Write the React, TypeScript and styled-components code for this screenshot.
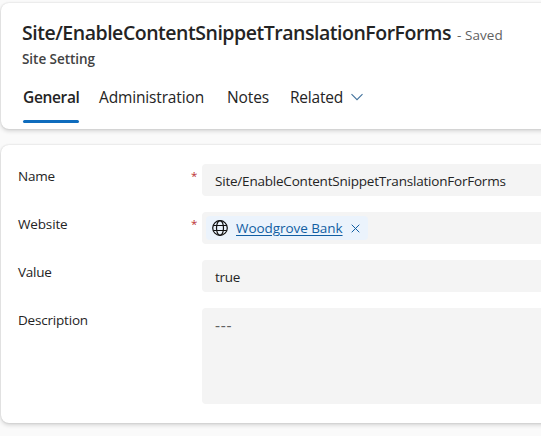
import React from "react";
import styled, { createGlobalStyle } from "styled-components";

const GlobalStyle = createGlobalStyle`
  * { box-sizing: border-box; }
  html, body { margin: 0; overflow: hidden; background: #fafafa; }
  body {
    font-family: "Segoe UI", "Open Sans", "Noto Sans", sans-serif;
    color: #242424;
  }
`;

const Page = styled.main`
  width: 541px;
  height: 436px;
  padding: 3px 0 0 1px;
  display: flex;
  flex-direction: column;
  gap: 16px;
  overflow: hidden;
`;

const Card = styled.section<{ $height: number }>`
  flex: none;
  width: 560px;
  height: ${(p) => p.$height}px;
  background: #fff;
  border-radius: 8px;
  box-shadow: 0 0 2px rgba(0, 0, 0, 0.14), 0 2px 4px rgba(0, 0, 0, 0.16);
`;

const HeaderCard = styled(Card)`
  padding: 16px 21px 0;
`;

const FormCard = styled(Card)`
  padding: 19px 0 0 17px;
  display: flex;
  flex-direction: column;
  gap: 16px;
`;

const TitleRow = styled.div`
  display: flex;
  align-items: baseline;
  height: 28px;
  line-height: 28px;
  white-space: nowrap;
`;

const Title = styled.h1`
  flex: none;
  width: 435px;
  margin: 0;
  font-size: 19.5px;
  font-weight: 600;
  line-height: 28px;
  letter-spacing: -0.475px;
`;

const Status = styled.span`
  font-size: 13.5px;
  color: #616161;
  letter-spacing: 0.05px;
`;

const Entity = styled.div`
  margin-top: 2px;
  font-size: 13.5px;
  font-weight: 600;
  line-height: 20px;
  color: #424242;
  letter-spacing: -0.05px;
`;

const Tabs = styled.nav`
  display: flex;
  margin: 16px 0 0 1px;
`;

const Tab = styled.button<{ $width: number; $track: number; $active?: boolean }>`
  display: flex;
  flex: none;
  align-items: flex-start;
  width: ${(p) => p.$width}px;
  height: 38px;
  margin-right: 20px;
  padding: 0;
  border: 0;
  background: none;
  color: #242424;
  font-family: inherit;
  font-size: 15.5px;
  font-weight: ${(p) => (p.$active ? 600 : 400)};
  line-height: 24px;
  letter-spacing: ${(p) => p.$track}px;
  text-align: left;
  white-space: nowrap;
  &::after {
    content: "";
    display: ${(p) => (p.$active ? "block" : "none")};
    flex: none;
    align-self: flex-end;
    width: 100%;
    height: 3px;
    margin-left: -100%;
    border-radius: 2px;
    background: #0f6cbd;
  }
`;

const TabLabel = styled.span`
  flex: none;
  width: 100%;
`;

const RelatedLabel = styled.span`
  width: 60px;
`;

const Chevron = styled.svg`
  margin-top: 6px;
  flex: none;
`;

const Row = styled.div<{ $height?: number }>`
  display: flex;
  height: ${(p) => p.$height ?? 32}px;
`;

const Label = styled.label<{ $track: number }>`
  width: 172px;
  padding-top: 2px;
  font-size: 13.5px;
  line-height: 20px;
  letter-spacing: ${(p) => p.$track}px;
`;

const Required = styled.span`
  width: 12px;
  padding: 2px 0 0 1px;
  font-size: 11.5px;
  line-height: 20px;
  color: #bc2f32;
`;

const Field = styled.div<{ $track: number; $empty?: boolean; $lookup?: boolean }>`
  flex: 1;
  height: 100%;
  padding: ${(p) => (p.$lookup ? "4px" : "7px 13px")};
  border-radius: 4px;
  background: #f4f4f4;
  color: ${(p) => (p.$empty ? "#616161" : "#242424")};
  font-size: ${(p) => (p.$empty ? 15.5 : 13.5)}px;
  line-height: 20px;
  white-space: nowrap;
  letter-spacing: ${(p) => p.$track}px;
`;

const Chip = styled.div`
  display: flex;
  align-items: center;
  width: 162px;
  height: 24px;
  padding-left: 6px;
  border-radius: 4px;
  background: #ebf3fc;
`;

const ChipLink = styled.a`
  flex: none;
  width: 106px;
  margin: 0 9px 0 8px;
  color: #115ea3;
  letter-spacing: -0.06px;
  text-decoration: underline;
  text-decoration-thickness: 1px;
  text-underline-offset: 2px;
`;

const fields = [
  { label: "Name", track: -0.25, valueTrack: -0.21, required: true, value: "Site/EnableContentSnippetTranslationForForms" },
  { label: "Website", track: -0.15, valueTrack: -0.2, required: true, lookup: true, value: "Woodgrove Bank" },
  { label: "Value", track: -0.25, valueTrack: -0.25, value: "true" },
  { label: "Description", track: -0.2, valueTrack: 0.7, value: "---", empty: true, height: 96 },
];

const GlobeIcon = () => (
  <svg width="16" height="16" viewBox="0 0 16 16" fill="none" stroke="#111" strokeWidth="1.2">
    <circle cx="8" cy="8" r="7.3" />
    <ellipse cx="8" cy="8" rx="3.5" ry="7.3" />
    <path d="M1.3 5.5h13.4M1.3 10.5h13.4" />
  </svg>
);

const CloseIcon = () => (
  <svg width="9" height="9" viewBox="0 0 9 9" stroke="#115ea3" strokeWidth="1">
    <path d="M0.7 0.7l7.600 7.600M8.300 0.7L0.7 8.300" />
  </svg>
);

export default function App() {
  return (
    <>
      <GlobalStyle />
      <Page>
        <HeaderCard $height={126}>
          <TitleRow>
            <Title>Site/EnableContentSnippetTranslationForForms</Title>
            <Status>- Saved</Status>
          </TitleRow>
          <Entity>Site Setting</Entity>
          <Tabs>
            <Tab $width={56} $track={-0.35} $active><TabLabel>General</TabLabel></Tab>
            <Tab $width={108} $track={-0.15}>Administration</Tab>
            <Tab $width={43} $track={-0.1}>Notes</Tab>
            <Tab $width={74} $track={-0.2}>
              <RelatedLabel>Related</RelatedLabel>
              <Chevron width="14" height="12" viewBox="0 0 14 12" fill="none" stroke="#42729c" strokeWidth="1.1">
                <path d="M1.5 3.2L7 8.7l5.500-5.500" />
              </Chevron>
            </Tab>
          </Tabs>
        </HeaderCard>
        <FormCard $height={278}>
          {fields.map((f) => (
            <Row key={f.label} $height={f.height}>
              <Label $track={f.track}>{f.label}</Label>
              <Required>{f.required ? "*" : ""}</Required>
              <Field $lookup={f.lookup} $empty={f.empty} $track={f.valueTrack}>
                {f.lookup ? (
                  <Chip>
                    <GlobeIcon />
                    <ChipLink>{f.value}</ChipLink>
                    <CloseIcon />
                  </Chip>
                ) : (
                  f.value
                )}
              </Field>
            </Row>
          ))}
        </FormCard>
      </Page>
    </>
  );
}
